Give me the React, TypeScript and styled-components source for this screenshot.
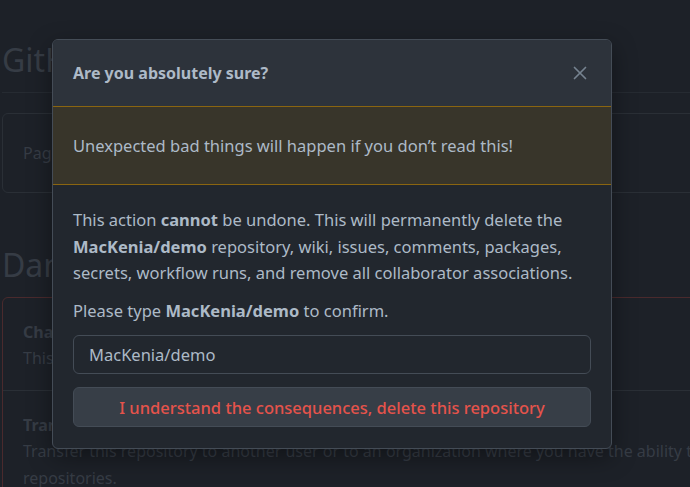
import styled, { createGlobalStyle } from "styled-components";

const GlobalStyle = createGlobalStyle`
  html, body {
    margin: 0;
    padding: 0;
    background: #1d2128;
  }
  body {
    font-family: "Noto Sans", "Open Sans", sans-serif;
    color: #adbac7;
    overflow: hidden;
  }
`;

export default function App() {
  return (
    <>
      <GlobalStyle />
      <Page>
        <BackdropContent>
          <PageTitle $underline>GitHub Pages</PageTitle>
          <Panel>
            <PanelText>Pages settings now has its own dedicated tab.</PanelText>
          </Panel>
          <PageTitle>Danger Zone</PageTitle>
          <DangerBox>
            <DangerRow>
              <RowTitle>Change repository visibility</RowTitle>
              <RowText>This repository is currently public.</RowText>
            </DangerRow>
            <DangerRow>
              <RowTitle>Transfer ownership</RowTitle>
              <RowText>
                Transfer this repository to another user or to an organization
                where you have the ability to create repositories.
              </RowText>
            </DangerRow>
          </DangerBox>
        </BackdropContent>
        <Overlay>
          <Dialog>
            <DialogHeader>
              <DialogTitle>Are you absolutely sure?</DialogTitle>
              <CloseButton aria-label="Close">
                <svg width="14" height="14" viewBox="0 0 14 14" fill="none" stroke="currentColor" strokeWidth="1.7" strokeLinecap="round">
                  <path d="M1.5 1.5l11 11M12.5 1.5l-11 11" />
                </svg>
              </CloseButton>
            </DialogHeader>
            <Flash>Unexpected bad things will happen if you don’t read this!</Flash>
            <DialogBody>
              <Para>
                This action <b>cannot</b> be undone. This will permanently delete
                the <b>MacKenia/demo</b> repository, wiki, issues, comments,
                packages, secrets, workflow runs, and remove all collaborator
                associations.
              </Para>
              <Para>
                Please type <b>MacKenia/demo</b> to confirm.
              </Para>
              <Input defaultValue="MacKenia/demo" />
              <DangerButton>I understand the consequences, delete this repository</DangerButton>
            </DialogBody>
          </Dialog>
        </Overlay>
      </Page>
    </>
  );
}

const Page = styled.div`
  position: relative;
  width: 690px;
  height: 487px;
  overflow: hidden;
`;

const BackdropContent = styled.div`
  padding: 38px 0 0 2px;
  width: 820px;
`;

const PageTitle = styled.h2<{ $underline?: boolean }>`
  margin: 0 0 ${(p) => (p.$underline ? "20px" : "10px")};
  padding-bottom: ${(p) => (p.$underline ? "10px" : "0")};
  font-size: 32px;
  font-weight: 400;
  line-height: 44px;
  color: #363c45;
  border-bottom: ${(p) => (p.$underline ? "1px solid #262b32" : "none")};
`;

const Panel = styled.div`
  border: 1px solid #2a2f36;
  border-radius: 6px;
  padding: 28px 20px;
  margin-bottom: 50px;
`;

const PanelText = styled.div`
  font-size: 16px;
  line-height: 22px;
  color: #363c45;
`;

const DangerBox = styled.div`
  border: 1px solid #4a2a2d;
  border-radius: 6px;
`;

const DangerRow = styled.div`
  padding: 22px 20px 18px;

  & + & {
    border-top: 1px solid #2a2f36;
  }
`;

const RowTitle = styled.div`
  font-size: 16px;
  font-weight: 700;
  color: #363c45;
  line-height: 24px;
`;

const RowText = styled.div`
  font-size: 16px;
  color: #363c45;
  line-height: 27px;
  margin-top: 1px;
`;

const Overlay = styled.div`
  position: absolute;
  inset: 0;
  padding: 39px 0 0 52px;
`;

const Dialog = styled.div`
  width: 558px;
  border: 1px solid #444c56;
  border-radius: 6px;
  background: #22272e;
  overflow: hidden;
  box-shadow: 0 8px 24px rgba(0, 0, 0, 0.4);
`;

const DialogHeader = styled.div`
  display: flex;
  align-items: center;
  justify-content: space-between;
  height: 66px;
  padding: 0 24px 0 20px;
  background: #2d333b;
`;

const DialogTitle = styled.h3`
  margin: 0;
  font-size: 16px;
  font-weight: 700;
  color: #adbac7;
`;

const CloseButton = styled.button`
  display: flex;
  align-items: center;
  justify-content: center;
  padding: 0;
  border: none;
  background: transparent;
  color: #768390;
  cursor: pointer;
`;

const Flash = styled.div`
  padding: 27px 20px 26px;
  font-size: 16.5px;
  line-height: 24px;
  background: #38352a;
  border-top: 1px solid #8a6510;
  border-bottom: 1px solid #8a6510;
  color: #adbac7;
`;

const DialogBody = styled.div`
  padding: 22px 20px 21px;
  display: flex;
  flex-direction: column;
`;

const Para = styled.p`
  margin: 0 0 11px;
  font-size: 16.5px;
  line-height: 26.5px;
  color: #adbac7;

  b {
    font-weight: 700;
  }
`;

const Input = styled.input`
  box-sizing: border-box;
  height: 39px;
  padding: 0 15px;
  font-family: inherit;
  font-size: 16.5px;
  color: #adbac7;
  background: #22272e;
  border: 1px solid #444c56;
  border-radius: 6px;
  outline: none;
`;

const DangerButton = styled.button`
  box-sizing: border-box;
  height: 40px;
  margin-top: 13px;
  font-family: inherit;
  font-size: 16.5px;
  font-weight: 500;
  color: #e5534b;
  background: #373e47;
  border: 1px solid #444c56;
  border-radius: 6px;
  cursor: pointer;
`;
